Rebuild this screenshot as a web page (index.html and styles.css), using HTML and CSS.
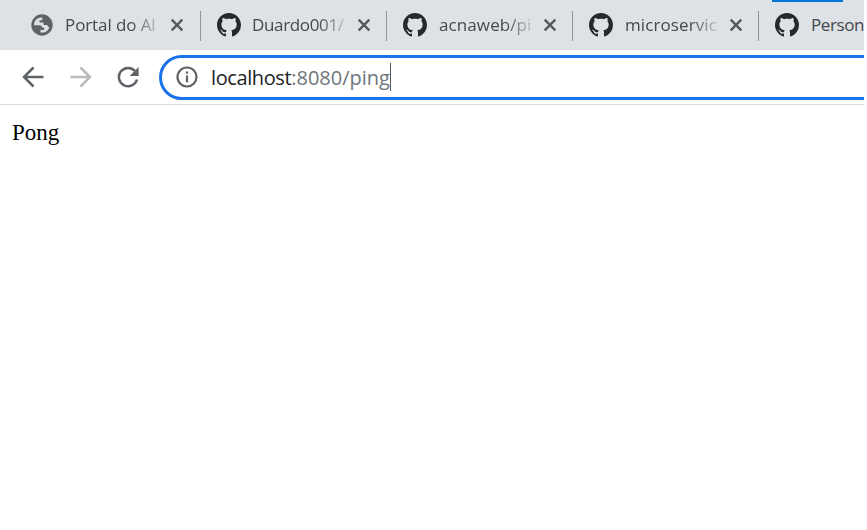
FILE: index.html
```
<!DOCTYPE html>
<html lang="pt-BR">
<head>
<meta charset="utf-8">
<title>localhost:8080/ping</title>
<link rel="stylesheet" href="styles.css">
</head>
<body>
<svg class="defs" aria-hidden="true">
  <symbol id="github" viewBox="0 0 16 16"><path d="M8 0C3.58 0 0 3.58 0 8c0 3.54 2.29 6.53 5.47 7.59.4.07.55-.17.55-.38 0-.19-.01-.82-.01-1.49-2.01.37-2.53-.49-2.69-.94-.09-.23-.48-.94-.82-1.13-.28-.15-.68-.52-.01-.53.63-.01 1.08.58 1.23.82.72 1.21 1.87.87 2.33.66.07-.52.28-.87.51-1.07-1.78-.2-3.64-.89-3.64-3.95 0-.87.31-1.59.82-2.15-.08-.2-.36-1.02.08-2.12 0 0 .67-.21 2.2.82.64-.18 1.32-.27 2-.27s1.36.09 2 .27c1.53-1.04 2.2-.82 2.2-.82.44 1.1.16 1.92.08 2.12.51.56.82 1.27.82 2.15 0 3.07-1.87 3.75-3.65 3.95.29.25.54.73.54 1.48 0 1.07-.01 1.93-.01 2.2 0 .21.15.46.55.38A8.01 8.01 0 0 0 16 8c0-4.42-3.58-8-8-8z"/></symbol>
  <symbol id="close" viewBox="0 0 14 14"><path d="M1.7 1.7l10.6 10.6M12.3 1.7L1.7 12.3" fill="none" stroke="currentColor" stroke-width="2.4"/></symbol>
</svg>
<div class="browser">
  <header class="tabs">
    <i class="accent"></i>
    <div class="tab">
      <svg class="favicon globe" viewBox="0 0 22 22"><circle cx="11" cy="11" r="10.7" fill="#5f6368"/><path d="M3 11.2h5.200c2 0 2.800.8 2.800 2.300h2.100v2.500H9.500v2.400c3.900 1 8-1.500 8.900-5.400-1.400 0-2.100-.7-2.100-1.900h-3.800V8.500H8.500V6.200h2.700V3.600C7 3 3 6.300 3 11.200z" fill="#dee1e6"/></svg>
      <span class="title portal">Portal do Al</span>
      <svg class="close"><use href="#close"/></svg>
    </div>
    <div class="tab">
      <svg class="favicon"><use href="#github"/></svg>
      <span class="title duardo">Duardo001/</span>
      <svg class="close"><use href="#close"/></svg>
    </div>
    <div class="tab">
      <svg class="favicon"><use href="#github"/></svg>
      <span class="title acna">acnaweb/pi</span>
      <svg class="close"><use href="#close"/></svg>
    </div>
    <div class="tab">
      <svg class="favicon"><use href="#github"/></svg>
      <span class="title micro">microservic</span>
      <svg class="close"><use href="#close"/></svg>
    </div>
    <div class="tab last">
      <svg class="favicon"><use href="#github"/></svg>
      <span class="title person">Person</span>
    </div>
  </header>
  <nav class="toolbar">
    <svg class="nav" viewBox="0 0 22 22"><path d="M21.500 11H2.500M11.500 1.500L2 11l9.500 9.500"/></svg>
    <svg class="nav forward" viewBox="0 0 22 22"><path d="M.5 11h19M10.500 1.500L20 11l-9.500 9.500"/></svg>
    <svg class="nav reload" viewBox="0 0 22 22"><path d="M20 13.500A9.200 9.200 0 1 1 17.900 4.900"/><path class="solid" d="M21.600 1v9h-9z"/></svg>
    <div class="address">
      <svg class="info" viewBox="0 0 22 22"><circle cx="11" cy="11" r="9.500"/><path d="M11 9.500v6.700M11 5.400v2.400"/></svg>
      <span class="host">localhost</span><span class="path">:8080/ping</span><i class="caret"></i>
    </div>
  </nav>
  <main>Pong</main>
</div>
</body>
</html>
```
FILE: styles.css
```
body {
  margin: 0;
  background: #fff;
}
.defs {
  position: absolute;
  width: 0;
  height: 0;
}
.browser {
  width: 864px;
  height: 530px;
  overflow: hidden;
}
.tabs {
  position: relative;
  display: flex;
  height: 50px;
  padding-left: 15px;
  background: #dee1e6;
  overflow: hidden;
}
.accent {
  position: absolute;
  left: 772px;
  top: 0;
  width: 71px;
  height: 1.500px;
  background: #0078d7;
}
.tab {
  position: relative;
  flex: none;
  display: flex;
  align-items: center;
  box-sizing: border-box;
  width: 186px;
}
.tab:not(.last)::after {
  content: "";
  position: absolute;
  right: 0;
  top: 11px;
  width: 1.500px;
  height: 30px;
  background: #909397;
}
.tab {
  padding-left: 16px;
}
.favicon {
  flex: none;
  width: 24px;
  height: 24px;
  margin-right: 11px;
  fill: #24292e;
}
.favicon.globe {
  width: 22px;
  height: 22px;
  margin-right: 12px;
}
.title {
  width: 94px;
  white-space: nowrap;
  font: 17px/26px "Open Sans", "Noto Sans", sans-serif;
  color: #45484c;
  -webkit-mask-image: linear-gradient(to right, #000 66px, transparent 100px);
  mask-image: linear-gradient(to right, #000 66px, transparent 100px);
}
.portal {
  letter-spacing: -0.1px;
}
.duardo {
  letter-spacing: -0.35px;
}
.acna {
  letter-spacing: 0.1px;
  padding-left: 1px;
  width: 93px;
}
.micro {
  letter-spacing: 0.1px;
  padding-left: 1px;
  width: 93px;
}
.person {
  padding-left: 1px;
  letter-spacing: -0.4px;
  -webkit-mask-image: none;
  mask-image: none;
}
.close {
  flex: none;
  width: 14px;
  height: 14px;
  margin-left: 11px;
  color: #55585c;
}
.toolbar {
  display: flex;
  align-items: center;
  box-sizing: border-box;
  height: 55px;
  padding-left: 22px;
  border-bottom: 1px solid #dadce0;
  overflow: hidden;
}
.nav {
  flex: none;
  width: 22px;
  height: 22px;
  margin-right: 26px;
  fill: none;
  stroke: #5f6368;
  stroke-width: 2.500;
}
.forward {
  margin-right: 25px;
  stroke: #b8babd;
}
.reload {
  margin-right: 27px;
}
.nav .solid {
  fill: #5f6368;
  stroke: none;
}
.address {
  flex: none;
  display: flex;
  align-items: center;
  box-sizing: border-box;
  width: 740px;
  height: 45px;
  margin-left: -7px;
  padding-left: 14px;
  border: 3px solid #1a73e8;
  border-radius: 23px;
  font: 20px/30px "Open Sans", "Noto Sans", sans-serif;
}
.info {
  width: 22px;
  height: 22px;
  margin-right: 13px;
  fill: none;
  stroke: #5f6368;
  stroke-width: 2.200;
}
.host,
.path {
  padding-top: 1px;
}
.host {
  letter-spacing: -0.4px;
  color: #202124;
}
.path {
  color: #70757a;
}
.caret {
  width: 1.500px;
  height: 28px;
  background: #55585c;
}
main {
  padding: 14px 0 0 12px;
  font: 23px/28px "Liberation Serif", serif;
  color: #000;
}
```
